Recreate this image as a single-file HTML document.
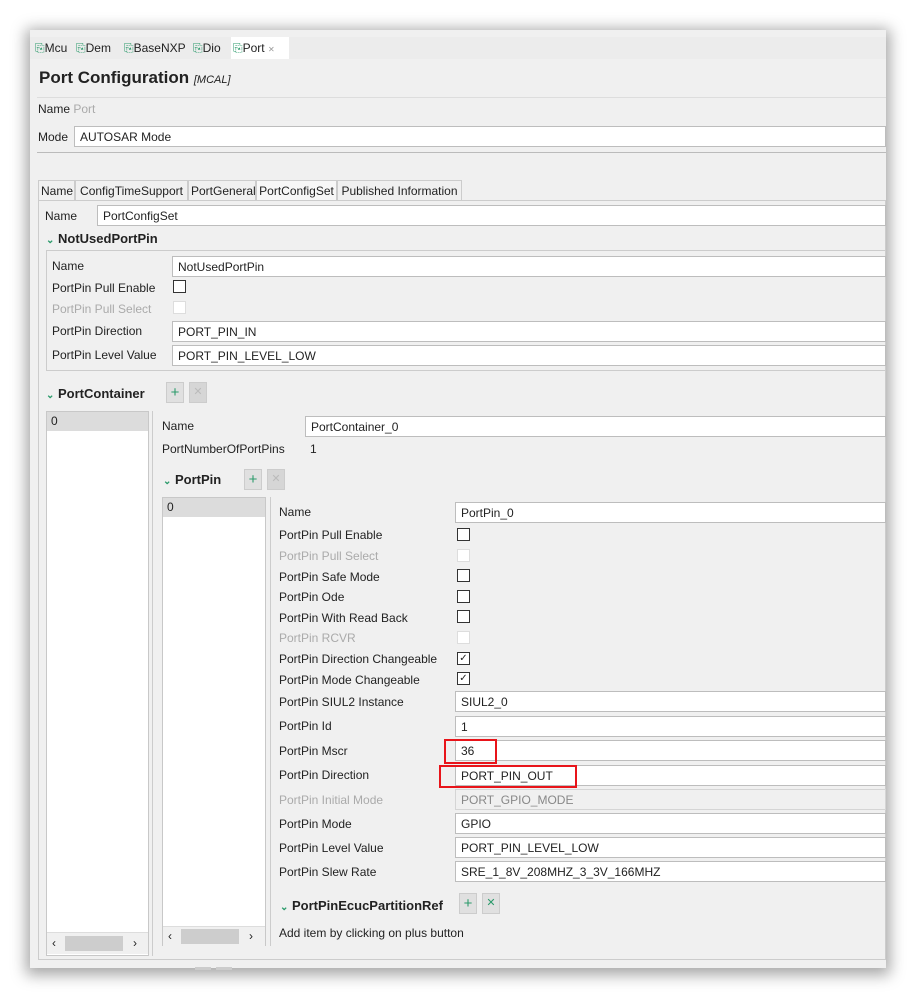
<!DOCTYPE html><html><head><style>
*{box-sizing:border-box;margin:0;padding:0}
body{width:917px;height:999px;background:#fff;position:relative;overflow:hidden;font-family:"Liberation Sans",sans-serif;font-size:12px;color:#222}
.a{position:absolute;white-space:nowrap}
.panel{position:absolute;left:30px;top:30px;width:856px;height:938px;background:#f0f0f0;box-shadow:0 3px 14px 4px rgba(0,0,0,.35)}
.in{position:absolute;background:#fff;border:1px solid #bdbdbd;height:21px;padding:3px 5px;white-space:nowrap}
.dis{background:#f0f0f0;color:#888;border-color:#d5d5d5}
.cb{position:absolute;width:13px;height:13px;border:1px solid #333;background:#fff}
.cbd{border-color:#ddd}
.g{color:#aaa}
.b{font-weight:bold;font-size:13px}
.btn{position:absolute;width:18px;height:21px;background:#e0e0e0;border:1px solid #ccc;text-align:center;font-size:15px;line-height:19px;color:#2a9a6a}
.btnx{color:#bbb;background:#d6d6d6;font-size:11px}
.list{position:absolute;background:#fff;border:1px solid #c8c8c8}
.sel{position:absolute;left:0;right:0;top:0;height:19px;background:#dcdcdc;padding:2px 4px}
.red{position:absolute;border:2px solid #e8141a}
.chev{color:#2a9a6a;font-size:10px;font-weight:bold}
.tab{position:absolute;top:180px;height:21px;padding:3px 2px;border:1px solid #ccc;background:#f0f0f0;text-align:center}
.t{position:absolute;top:41px;white-space:nowrap}
.t i{color:#2a9a6a;font-style:normal}
</style></head><body>
<div class="panel"></div>
<div class="a" style="left:30px;top:37px;width:856px;height:22px;background:#ececec"></div>
<div class="a" style="left:231px;top:37px;width:58px;height:22px;background:#fff"></div>
<div class="t" style="left:35px"><i>&#x2398;</i>Mcu</div>
<div class="t" style="left:76px"><i>&#x2398;</i>Dem</div>
<div class="t" style="left:124px"><i>&#x2398;</i>BaseNXP</div>
<div class="t" style="left:193px"><i>&#x2398;</i>Dio</div>
<div class="t" style="left:233px"><i>&#x2398;</i>Port <span style="color:#999;font-size:8px">✕</span></div>
<div class="a" style="left:39px;top:68px;font-size:17px;font-weight:bold">Port Configuration <span style="font-size:11px;font-weight:normal;font-style:italic">[MCAL]</span></div>
<div class="a" style="left:37px;top:97px;width:849px;border-top:1px solid #ddd"></div>
<div class="a" style="left:38px;top:102px">Name <span class="g">Port</span></div>
<div class="a" style="left:38px;top:130px">Mode</div>
<div class="in" style="left:74px;top:126px;width:812px">AUTOSAR Mode</div>
<div class="a" style="left:37px;top:152px;width:849px;border-top:1px solid #bbb"></div>
<div class="a" style="left:38px;top:200px;width:848px;height:760px;border:1px solid #ccc"></div>
<div class="tab" style="left:38px;width:37px">Name</div><div class="tab" style="left:75px;width:113px">ConfigTimeSupport</div><div class="tab" style="left:188px;width:68px">PortGeneral</div><div class="tab" style="left:256px;width:81px;background:#f7f7f7">PortConfigSet</div><div class="tab" style="left:337px;width:125px">Published Information</div>
<div class="a" style="left:45px;top:209px">Name</div>
<div class="in" style="left:97px;top:205px;width:789px">PortConfigSet</div>
<div class="a b" style="left:46px;top:231px"><span class="chev">&#x2304;</span> NotUsedPortPin</div>
<div class="a" style="left:46px;top:250px;width:840px;height:121px;border:1px solid #ccc"></div>
<div class="a" style="left:52px;top:259px">Name</div><div class="in" style="left:172px;top:256px;width:714px">NotUsedPortPin</div>
<div class="a" style="left:52px;top:281px">PortPin Pull Enable</div><div class="cb" style="left:173px;top:280px"></div>
<div class="a g" style="left:52px;top:302px">PortPin Pull Select</div><div class="cb cbd" style="left:173px;top:301px"></div>
<div class="a" style="left:52px;top:324px">PortPin Direction</div><div class="in" style="left:172px;top:321px;width:714px">PORT_PIN_IN</div>
<div class="a" style="left:52px;top:348px">PortPin Level Value</div><div class="in" style="left:172px;top:345px;width:714px">PORT_PIN_LEVEL_LOW</div>
<div class="a b" style="left:46px;top:386px"><span class="chev">&#x2304;</span> PortContainer</div>
<div class="btn" style="left:166px;top:382px">+</div><div class="btn btnx" style="left:189px;top:382px">✕</div>
<div class="list" style="left:46px;top:411px;width:103px;height:545px"><div class="sel">0</div>
<div class="a" style="left:0;right:0;top:520px;height:22px;background:#f0f0f0;border-top:1px solid #ddd"><span class="a" style="left:5px;top:3px">‹</span><div class="a" style="left:18px;top:3px;width:58px;height:15px;background:#cdcdcd"></div><span class="a" style="left:86px;top:3px">›</span></div></div>
<div class="a" style="left:152px;top:411px;height:545px;border-left:1px solid #ccc"></div>
<div class="a" style="left:162px;top:419px">Name</div><div class="in" style="left:305px;top:416px;width:581px">PortContainer_0</div>
<div class="a" style="left:162px;top:442px">PortNumberOfPortPins</div><div class="a" style="left:310px;top:442px">1</div>
<div class="a b" style="left:163px;top:472px"><span class="chev">&#x2304;</span> PortPin</div>
<div class="btn" style="left:244px;top:469px">+</div><div class="btn btnx" style="left:267px;top:469px">✕</div>
<div class="list" style="left:162px;top:497px;width:104px;height:449px"><div class="sel">0</div>
<div class="a" style="left:0;right:0;top:428px;height:20px;background:#f0f0f0;border-top:1px solid #ddd"><span class="a" style="left:5px;top:2px">‹</span><div class="a" style="left:18px;top:2px;width:58px;height:15px;background:#cdcdcd"></div><span class="a" style="left:86px;top:2px">›</span></div></div>
<div class="a" style="left:270px;top:497px;height:449px;border-left:1px solid #ccc"></div>
<div class="a" style="left:279px;top:505px">Name</div><div class="in" style="left:455px;top:502px;width:431px">PortPin_0</div>
<div class="a" style="left:279px;top:528px">PortPin Pull Enable</div><div class="cb" style="left:457px;top:528px"></div>
<div class="a g" style="left:279px;top:549px">PortPin Pull Select</div><div class="cb cbd" style="left:457px;top:549px"></div>
<div class="a" style="left:279px;top:570px">PortPin Safe Mode</div><div class="cb" style="left:457px;top:569px"></div>
<div class="a" style="left:279px;top:590px">PortPin Ode</div><div class="cb" style="left:457px;top:590px"></div>
<div class="a" style="left:279px;top:611px">PortPin With Read Back</div><div class="cb" style="left:457px;top:610px"></div>
<div class="a g" style="left:279px;top:631px">PortPin RCVR</div><div class="cb cbd" style="left:457px;top:631px"></div>
<div class="a" style="left:279px;top:652px">PortPin Direction Changeable</div><div class="cb" style="left:457px;top:652px;font-size:10px;line-height:11px;text-align:center">✓</div>
<div class="a" style="left:279px;top:673px">PortPin Mode Changeable</div><div class="cb" style="left:457px;top:672px;font-size:10px;line-height:11px;text-align:center">✓</div>
<div class="a" style="left:279px;top:695px">PortPin SIUL2 Instance</div><div class="in" style="left:455px;top:691px;width:431px">SIUL2_0</div>
<div class="a" style="left:279px;top:719px">PortPin Id</div><div class="in" style="left:455px;top:716px;width:431px">1</div>
<div class="a" style="left:279px;top:744px">PortPin Mscr</div><div class="in" style="left:455px;top:740px;width:431px">36</div>
<div class="a" style="left:279px;top:768px">PortPin Direction</div><div class="in" style="left:455px;top:765px;width:431px">PORT_PIN_OUT</div>
<div class="a g" style="left:279px;top:793px">PortPin Initial Mode</div><div class="in dis" style="left:455px;top:789px;width:431px">PORT_GPIO_MODE</div>
<div class="a" style="left:279px;top:817px">PortPin Mode</div><div class="in" style="left:455px;top:813px;width:431px">GPIO</div>
<div class="a" style="left:279px;top:841px">PortPin Level Value</div><div class="in" style="left:455px;top:837px;width:431px">PORT_PIN_LEVEL_LOW</div>
<div class="a" style="left:279px;top:865px">PortPin Slew Rate</div><div class="in" style="left:455px;top:861px;width:431px">SRE_1_8V_208MHZ_3_3V_166MHZ</div>
<div class="red" style="left:444px;top:739px;width:53px;height:25px"></div>
<div class="red" style="left:439px;top:765px;width:138px;height:23px"></div>
<div class="a b" style="left:280px;top:898px"><span class="chev">&#x2304;</span> PortPinEcucPartitionRef</div>
<div class="btn" style="left:459px;top:893px">+</div><div class="btn" style="left:482px;top:893px;font-size:11px">✕</div>
<div class="a" style="left:279px;top:926px">Add item by clicking on plus button</div>
<div class="a" style="left:195px;top:967px;width:16px;height:3px;background:#ccc"></div><div class="a" style="left:216px;top:967px;width:16px;height:3px;background:#ccc"></div>
</body></html>
